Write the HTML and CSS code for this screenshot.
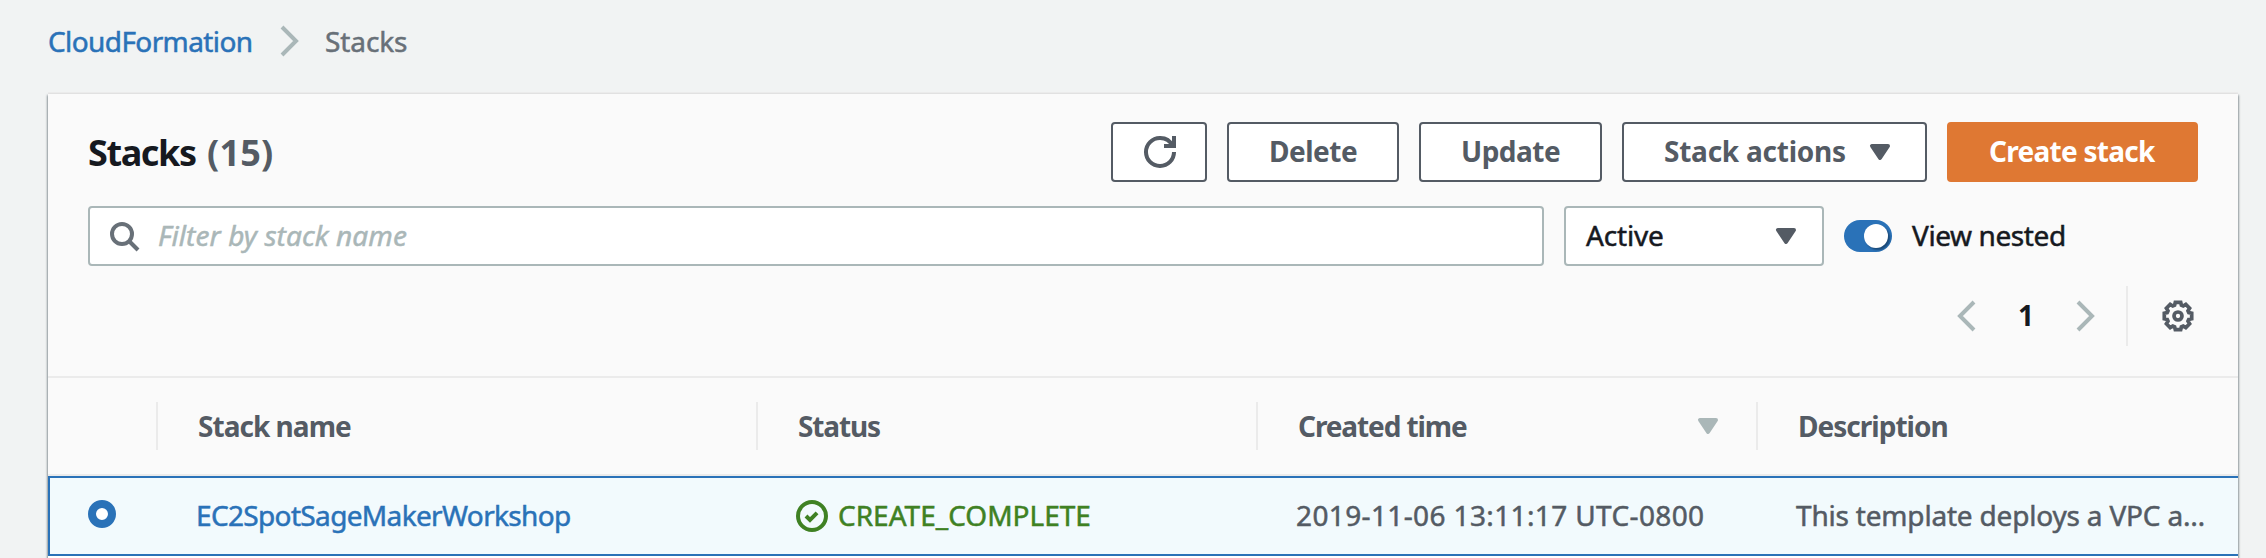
FILE: index.html
```
<!DOCTYPE html>
<html lang="en">
<head>
<meta charset="utf-8">
<title>CloudFormation - Stacks</title>
<link rel="stylesheet" href="styles.css">
</head>
<body>
<nav class="breadcrumb">
  <a class="crumb-link" href="#">CloudFormation</a>
  <svg class="icon muted" viewBox="0 0 16 16"><path d="m4 1 7 7-7 7"/></svg>
  <span class="crumb-current">Stacks</span>
</nav>
<main class="panel">
  <header class="panel-header">
    <div class="title-row">
      <h1 class="title">Stacks</h1><span class="count">(15)</span>
      <div class="actions">
        <button class="btn btn-refresh" aria-label="Refresh"><svg class="icon" viewBox="0 0 16 16"><path d="M10 5h5V0"/><path d="M15 8a6.957 6.957 0 0 1-7 7 6.957 6.957 0 0 1-7-7 6.957 6.957 0 0 1 7-7 6.87 6.87 0 0 1 6.3 4"/></svg></button>
        <button class="btn btn-delete">Delete</button>
        <button class="btn btn-update">Update</button>
        <button class="btn btn-actions"><span class="label-actions">Stack actions</span><svg class="icon caret" viewBox="0 0 16 16"><path d="M4 5h8l-4 6-4-6z"/></svg></button>
        <button class="btn btn-primary">Create stack</button>
      </div>
    </div>
    <div class="filter-row">
      <div class="search">
        <svg class="icon search-icon" viewBox="0 0 16 16"><circle cx="7" cy="7" r="5"/><path d="m15 15-4-4"/></svg>
        <span class="placeholder">Filter by stack name</span>
      </div>
      <div class="select"><span class="select-value">Active</span><svg class="icon caret" viewBox="0 0 16 16"><path d="M4 5h8l-4 6-4-6z"/></svg></div>
      <div class="toggle"><span class="knob"></span></div>
      <span class="toggle-label">View nested</span>
    </div>
    <div class="pager-row">
      <svg class="icon muted" viewBox="0 0 16 16"><path d="m11 1-7 7 7 7"/></svg>
      <span class="page">1</span>
      <svg class="icon muted" viewBox="0 0 16 16"><path d="m4 1 7 7-7 7"/></svg>
      <span class="pager-divider"></span>
      <svg class="icon gear" viewBox="-16 -16 32 32"><polygon points="13.7,2.7 10.8,3.4 10,5.2 11.6,7.8 7.8,11.6 5.2,10 3.4,10.8 2.7,13.7 -2.7,13.7 -3.4,10.8 -5.2,10 -7.8,11.6 -11.6,7.8 -10,5.2 -10.8,3.4 -13.7,2.7 -13.7,-2.7 -10.8,-3.4 -10,-5.2 -11.6,-7.8 -7.8,-11.6 -5.2,-10 -3.4,-10.8 -2.7,-13.7 2.7,-13.7 3.4,-10.8 5.2,-10 7.8,-11.6 11.6,-7.8 10,-5.2 10.8,-3.4 13.7,-2.7"/><circle r="4"/></svg>
    </div>
  </header>
  <div class="grid thead">
    <div class="th"></div>
    <div class="th th-name">Stack name</div>
    <div class="th th-status">Status</div>
    <div class="th th-time"><span>Created time</span><svg class="icon caret sort" viewBox="0 0 16 16"><path d="M4 5h8l-4 6-4-6z"/></svg></div>
    <div class="th th-desc">Description</div>
  </div>
  <div class="grid row">
    <div class="td td-radio"><span class="radio"></span></div>
    <div class="td"><a class="stack-link" href="#">EC2SpotSageMakerWorkshop</a></div>
    <div class="td td-status"><svg class="icon" viewBox="0 0 16 16"><circle cx="8" cy="8" r="7"/><path d="m5 8 2 2 3.521-3.521"/></svg><span class="status-text">CREATE_COMPLETE</span></div>
    <div class="td"><span class="time">2019-11-06 13:11:17 UTC-0800</span></div>
    <div class="td"><span class="desc">This template deploys a VPC a…</span></div>
  </div>
</main>
</body>
</html>
```
FILE: styles.css
```
* { box-sizing: border-box; }

body {
  margin: 0;
  height: 558px;
  overflow: hidden;
  background: #f1f3f3;
  color: #16191f;
  font: 28px/36px "Noto Sans", "Open Sans", sans-serif;
  white-space: nowrap;
}

a { text-decoration: none; color: #2a72b8; }

.icon {
  width: 32px;
  height: 32px;
  flex: none;
  fill: none;
  stroke: currentColor;
  stroke-width: 2;
}
.caret { fill: currentColor; stroke-linejoin: round; }
.muted { color: #aab7b8; }

.crumb-link, .crumb-current, .placeholder, .select-value, .toggle-label, .row {
  -webkit-text-stroke: .5px currentColor;
}

.breadcrumb {
  display: flex;
  align-items: center;
  height: 94px;
  padding: 0 48px 12px;
}
.crumb-link { width: 226px; letter-spacing: -0.6px; }
.crumb-current { margin-left: 19px; padding-bottom: 0; color: #687078; letter-spacing: -0.1px; }

.panel {
  width: 2190px;
  height: 480px;
  margin-left: 48px;
  background: #fff;
  box-shadow: 0 2px 2px rgba(0, 28, 36, .3), 1px 1px 2px rgba(0, 28, 36, .3), -1px 1px 2px rgba(0, 28, 36, .3), 0 -2px 0 #ebebeb;
}
.panel-header {
  height: 284px;
  padding: 28px 40px 0;
  background: #fafafa;
  border-bottom: 2px solid #ebebeb;
}

.title-row { display: flex; align-items: center; height: 60px; }
.title { margin: 0; width: 119px; padding-top: 2px; font-size: 36px; letter-spacing: -1.4px; }
.count { padding-top: 2px; color: #545b64; font-size: 36px; font-weight: 700; letter-spacing: .2px; }
.actions { display: flex; gap: 20px; margin-left: auto; }

.btn {
  display: flex;
  align-items: center;
  height: 60px;
  padding: 0 40px 2px 40px;
  border: 2px solid #545b64;
  border-radius: 4px;
  background: #fff;
  color: #545b64;
  font: 700 28px/36px "Noto Sans", "Open Sans", sans-serif;
}
.btn-refresh { width: 96px; padding: 0 0 0 31px; }
.btn-delete { width: 172px; letter-spacing: -.48px; }
.btn-update { width: 183px; letter-spacing: -.5px; }
.btn-actions { width: 305px; padding-right: 0; letter-spacing: -.24px; }
.label-actions { width: 200px; flex: none; text-align: left; }
.btn-actions .caret { margin-top: 2px; }
.btn-primary {
  width: 251px;
  border-color: #df7833;
  background: #df7833;
  color: #fff;
  letter-spacing: -.73px;
}

.filter-row { display: flex; align-items: center; height: 60px; margin-top: 24px; }
.search, .select {
  display: flex;
  align-items: center;
  height: 60px;
  border: 2px solid #aab7b8;
  border-radius: 4px;
  background: #fff;
}
.search { width: 1456px; padding-left: 18px; }
.search-icon { color: #687078; }
.placeholder { margin-left: 18px; padding-bottom: 2px; color: #aab7b8; font-style: italic; letter-spacing: .09px; }
.select { width: 260px; margin-left: 20px; padding: 0 20px; justify-content: space-between; }
.select-value { padding-bottom: 2px; letter-spacing: -.18px; }
.select .caret { color: #545b64; }
.toggle {
  display: flex;
  align-items: center;
  justify-content: flex-end;
  width: 48px;
  height: 32px;
  margin-left: 20px;
  padding-right: 4px;
  border-radius: 16px;
  background: #2a72b8;
}
.knob { width: 24px; height: 24px; border-radius: 50%; background: #fff; box-shadow: 2px 2px 2px rgba(0, 0, 0, .35); }
.toggle-label { margin-left: 20px; padding-bottom: 2px; letter-spacing: -.4px; }

.pager-row { display: flex; align-items: center; justify-content: flex-end; height: 60px; margin-top: 20px; padding-right: 4px; }
.page { width: 86px; padding: 0 2px 2px 0; text-align: center; font-weight: 700; }
.pager-divider { width: 2px; height: 60px; margin: 0 34px 0 24px; background: #ebebeb; }
.gear { color: #545b64; stroke-width: 3.7; }

.grid { display: grid; grid-template-columns: 108px 600px 500px 500px 482px; }
.thead {
  align-items: center;
  height: 98px;
  background: #fafafa;
  border-bottom: 2px solid #ebebeb;
  color: #545b64;
  font-weight: 700;
}
.th { display: flex; align-items: center; height: 48px; padding-bottom: 1px; }
.th + .th { padding-left: 40px; border-left: 2px solid #ebebeb; }
.th-name { letter-spacing: -.97px; }
.th-status { letter-spacing: -1.14px; }
.th-time { letter-spacing: -1.1px; justify-content: space-between; padding-right: 32px; }
.th-desc { letter-spacing: -.98px; }
.sort { margin-top: 1px; color: #aab7b8; }

.row {
  height: 80px;
  grid-template-columns: 110px 600px 500px 500px 480px;
  border: solid #2a72b8;
  border-width: 2px 0;
  background: #f2fafd;
  box-shadow: inset 2px 0 #2a72b8;
  color: #545b64;
}
.td { display: flex; align-items: center; padding-left: 38px; }
.td-radio { padding: 0 0 4px 40px; }
.radio { width: 28px; height: 28px; border: 8px solid #2a72b8; border-radius: 50%; background: #fff; }
.stack-link, .status-text, .time, .desc { padding-bottom: 2px; }
.stack-link { letter-spacing: -.65px; }
.td-status { color: #3f8123; }
.status-text { margin-left: 10px; letter-spacing: 0; }
.time { letter-spacing: .37px; }
.desc { letter-spacing: -.19px; }
```
